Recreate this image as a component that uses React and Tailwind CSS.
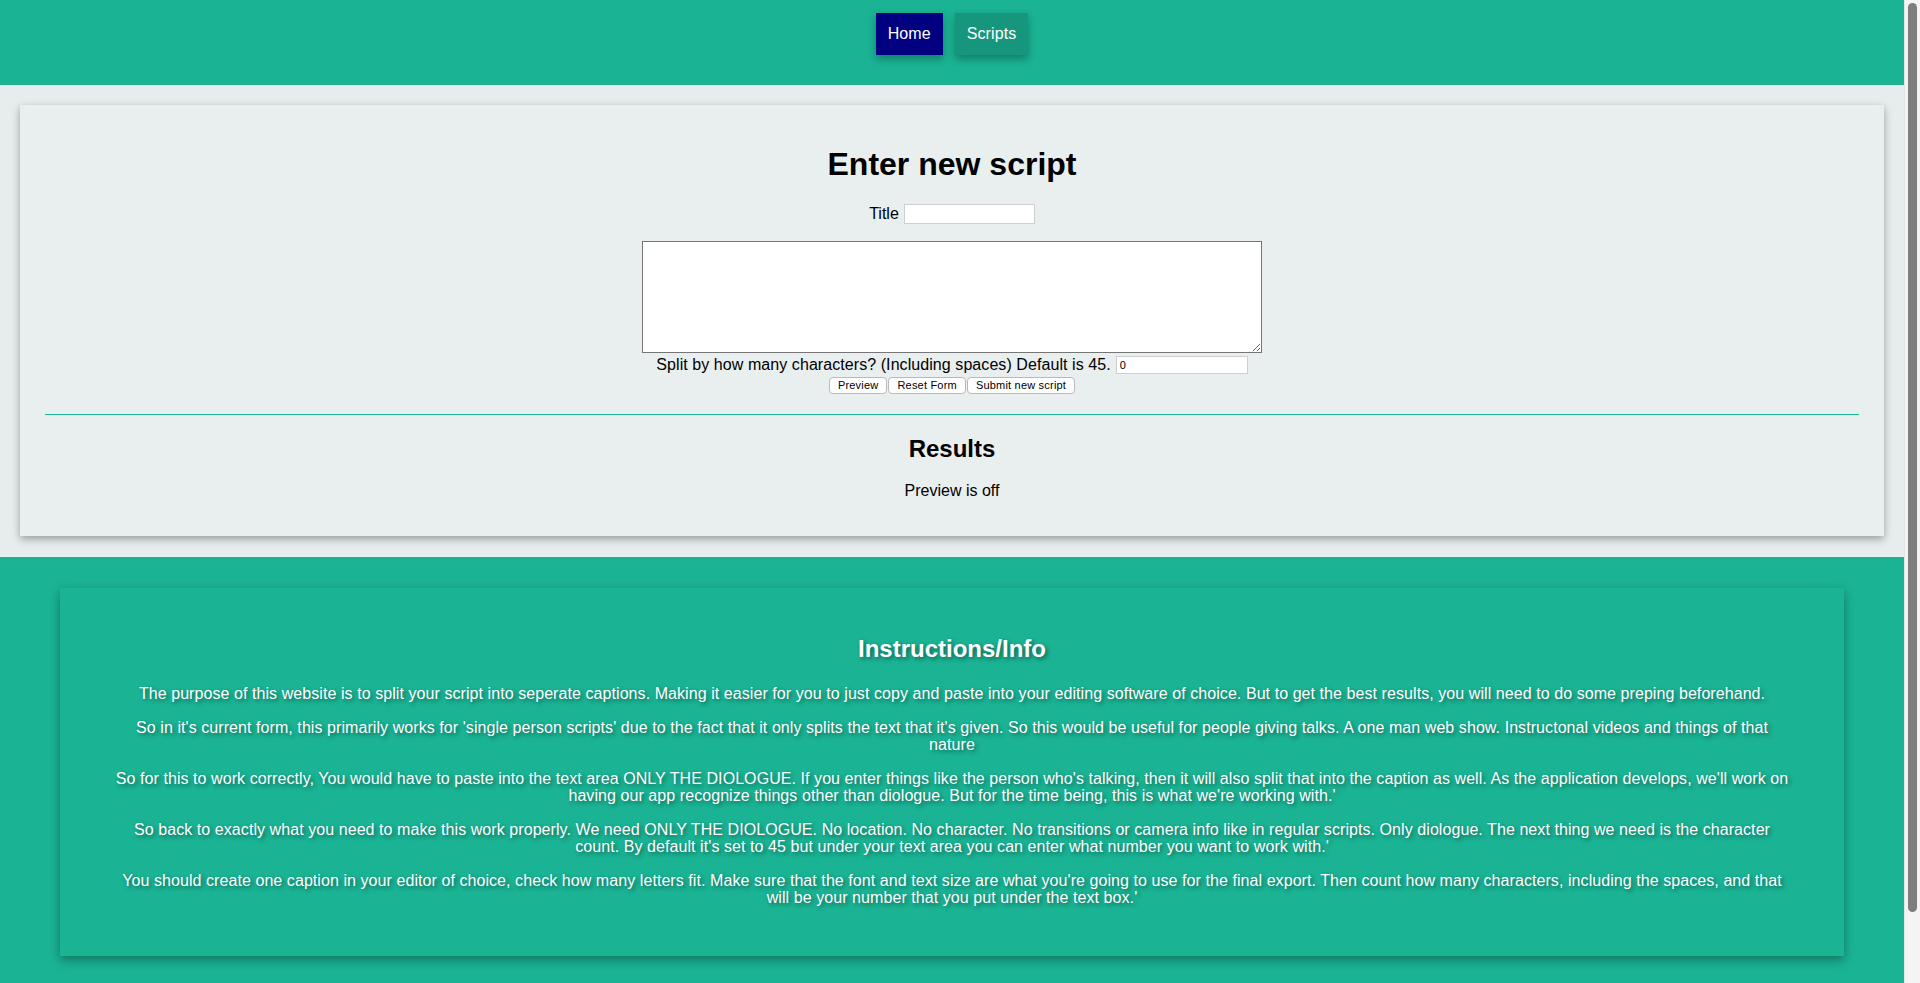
import React from 'react';

// line breaks follow the reference's wrapping
const paragraphs = [
  ["The purpose of this website is to split your script into seperate captions. Making it easier for you to just copy and paste into your editing software of choice. But to get the best results, you will need to do some preping beforehand."],
  ["So in it's current form, this primarily works for 'single person scripts' due to the fact that it only splits the text that it's given. So this would be useful for people giving talks. A one man web show. Instructonal videos and things of that", "nature"],
  ["So for this to work correctly, You would have to paste into the text area ONLY THE DIOLOGUE. If you enter things like the person who's talking, then it will also split that into the caption as well. As the application develops, we'll work on", "having our app recognize things other than diologue. But for the time being, this is what we're working with.'"],
  ["So back to exactly what you need to make this work properly. We need ONLY THE DIOLOGUE. No location. No character. No transitions or camera info like in regular scripts. Only diologue. The next thing we need is the character", "count. By default it's set to 45 but under your text area you can enter what number you want to work with.'"],
  ["You should create one caption in your editor of choice, check how many letters fit. Make sure that the font and text size are what you're going to use for the final export. Then count how many characters, including the spaces, and that", "will be your number that you put under the text box.'"],
];

const Nav = () => (
  <header className="h-[85px] bg-[#1ab394] flex justify-center items-start pt-[13px] gap-3">
    <a className="h-[42px] px-3 flex items-center bg-[#000080] text-white text-[16px] tracking-[0.1px] shadow-[0_4px_8px_rgba(0,0,0,0.3)] cursor-pointer">
      Home
    </a>
    <a className="h-[42px] px-3 flex items-center bg-[#16977d] text-white text-[16px] tracking-[0.1px] shadow-[0_4px_8px_rgba(0,0,0,0.3)] cursor-pointer">
      Scripts
    </a>
  </header>
);

const Btn = ({ children }) => (
  <button className="h-[17px] px-[8px] text-[11px] tracking-[0.2px] leading-none bg-white border border-[#b9b9b9] rounded-[4px] text-black">
    {children}
  </button>
);

const ScriptForm = () => (
  <section className="bg-[#e7eded] pt-5 pb-[21px]">
    <div className="mx-5 bg-[#e9eeef] shadow-[0_3px_8px_rgba(0,0,0,0.35)] pt-[41px] pb-[36px] flex flex-col items-center text-black">
      <h1 className="text-[32px] leading-[37px] font-bold">Enter new script</h1>
      <div className="mt-[21px] h-[20px] flex items-center gap-[5px] text-[16px]">
        <label>Title</label>
        <input type="text" className="w-[131px] h-[20px] bg-white border border-[#cfcfcf] outline-none px-1 text-[13px]" />
      </div>
      <textarea className="mt-[17px] w-[620px] h-[112px] bg-white border border-[#767676] outline-none p-1 text-[13px]" />
      <div className="h-[24px] flex items-center gap-[5px] text-[16px] tracking-[0.07px]">
        <span>Split by how many characters? (Including spaces) Default is 45.</span>
        <input type="text" defaultValue="0" className="w-[132px] h-[18px] bg-white border border-[#cfcfcf] outline-none px-[3px] text-[11px]" />
      </div>
      <div className="flex gap-[1px]">
        <Btn>Preview</Btn>
        <Btn>Reset Form</Btn>
        <Btn>Submit new script</Btn>
      </div>
      <div className="self-stretch mx-[25px] mt-[20px] border-t border-[#1ab394]" />
      <h2 className="mt-[20px] text-[24px] leading-[28px] font-bold">Results</h2>
      <p className="mt-[19px] text-[16px] leading-[18px]">Preview is off</p>
    </div>
  </section>
);

const Info = () => (
  <section className="bg-[#1ab394] pt-[31px] pb-[100px]">
    <div className="mx-[60px] bg-[#1ab394] shadow-[0_4px_10px_rgba(0,0,0,0.35)] px-[40px] pt-[47px] pb-[50px] text-center text-white [text-shadow:2px_2px_4px_rgba(0,0,0,0.45)]">
      <h2 className="text-[24px] leading-[28px] font-bold">Instructions/Info</h2>
      <div className="mt-[22px] flex flex-col gap-[17px]">
        {paragraphs.map((lines, i) => (
          <p key={i} className="text-[16px] leading-[17px] tracking-[0.07px]">
            {lines.map((l, j) => (
              <React.Fragment key={j}>
                {j > 0 && <br />}
                {l}
              </React.Fragment>
            ))}
          </p>
        ))}
      </div>
    </div>
  </section>
);

// stand-in for the browser's scrollbar seen in the screenshot
const ScrollRail = () => (
  <aside className="w-[16px] shrink-0 bg-[#f4f4f4] border-l border-[#e4e4e4] px-[3px] pt-[3px]">
    <div className="h-[909px] rounded-full bg-[#7e7e7e]" />
  </aside>
);

export default function App() {
  return (
    <div className="h-screen flex font-['Liberation_Sans',Arial,sans-serif]">
      <main className="flex-1 min-w-0 overflow-y-auto [scrollbar-width:none]">
        <Nav />
        <ScriptForm />
        <Info />
      </main>
      <ScrollRail />
    </div>
  );
}
